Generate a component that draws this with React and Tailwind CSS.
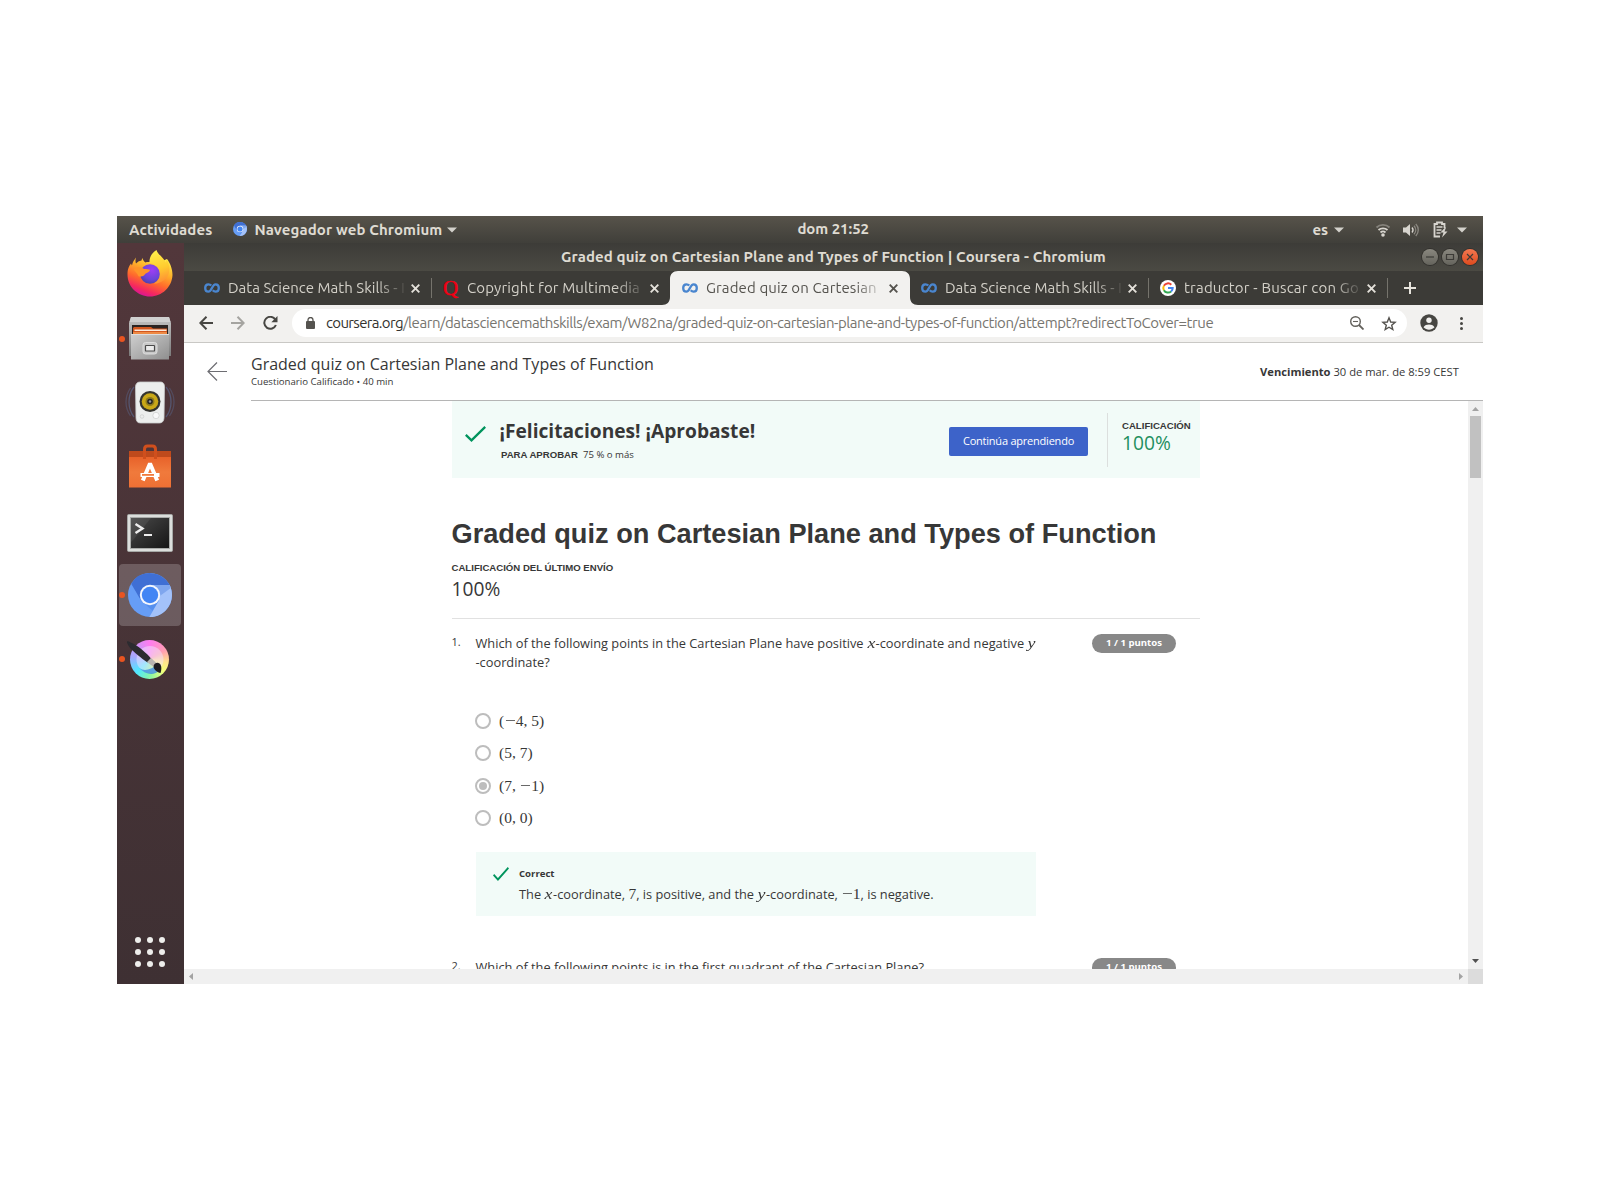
import React from "react";

function T({ className = "", children }) {
  return <span className={"whitespace-pre " + className}>{children}</span>;
}

const Caret = () => (
  <svg width="10" height="6" viewBox="0 0 10 6" fill="#d3d1cb"><path d="M0 .5h10L5 5.5z" /></svg>
);

function ChromiumIcon({ size }) {
  return (
    <svg width={size} height={size} viewBox="0 0 44 44">
      <circle cx="22" cy="22" r="22" fill="#669df6" />
      <path d="M3.200 10.800A22 22 0 0 1 41.600 12L22 12.100 13 27.500z" fill="#3f6fd4" />
      <path d="M22 12.100H41.600A22 22 0 0 1 21.400 44L31 27.300z" fill="#a3c2fa" />
      <path d="M22 12.100H41.600l1.200 3-11 8z" fill="#7fa6ee" />
      <path d="M13 27.500l9 4.500 8.600-4.200-6 10z" fill="#4a86ea" opacity=".6" />
      <circle cx="22" cy="22" r="10.200" fill="#f3f6fd" />
      <circle cx="22" cy="22" r="8.200" fill="#4285f4" />
    </svg>
  );
}

function FirefoxIcon() {
  return (
    <svg width="46" height="48" viewBox="0 0 46 48">
      <defs>
        <linearGradient id="ffBody" x1=".8" y1="0" x2=".35" y2="1">
          <stop offset="0" stopColor="#fff14d" /><stop offset=".35" stopColor="#ffb02a" />
          <stop offset=".62" stopColor="#ff6a2c" /><stop offset=".85" stopColor="#f5285f" /><stop offset="1" stopColor="#d7149a" />
        </linearGradient>
        <linearGradient id="ffTail" x1=".4" y1="0" x2=".6" y2="1">
          <stop offset="0" stopColor="#fff04a" /><stop offset=".55" stopColor="#ffcb2f" /><stop offset="1" stopColor="#ff8a35" />
        </linearGradient>
        <radialGradient id="ffGlobe" cx=".6" cy=".3" r=".8">
          <stop offset="0" stopColor="#a03df5" /><stop offset=".6" stopColor="#6a45d8" /><stop offset="1" stopColor="#45409c" />
        </radialGradient>
      </defs>
      <path d="M9 8.500C8.200 11 8.400 13 9 14.500c1.500-1.500 3-2.600 5.500-3l.8-2.500c.7 2 1.500 3 3 4.500C21 12.500 26 13 29 15l11-5c3 4 5.500 9.500 5.500 16C45 38 35 47.500 23 47.500S.5 38 .5 25.500C.5 20 2 17 4 14.500c.5 1 .7 1.500 1 2C5.500 13.500 7 11 9 8.500z" fill="url(#ffBody)" />
      <path d="M29.500 1c-5 3-7.500 8-7 13 4 .5 8 3 9.500 8 1 5-1 10-5 12.500 5 .5 13-3 15-11 1-5 0-9-2.500-13-.2 1.500-.5 2.200-1 3C37.500 9 31 6 29.500 1z" fill="url(#ffTail)" />
      <circle cx="23" cy="25" r="9.800" fill="url(#ffGlobe)" />
      <path d="M6.500 20.500c4-3.500 8-2 10.500-.5 2.500.2 5 .2 6 .8-.5 2.700-4 3.200-5 4.400-1.500 1.800-3 2.800-6.500 2C10 24 8 22 6.500 20.500z" fill="#ff9528" />
    </svg>
  );
}

function FilesIcon() {
  return (
    <svg width="44" height="46" viewBox="0 0 44 46">
      <defs>
        <linearGradient id="fBack" x1="0" y1="0" x2="0" y2="1"><stop offset="0" stopColor="#c4c4c4" /><stop offset="1" stopColor="#7b7b7b" /></linearGradient>
        <linearGradient id="fFront" x1="0" y1="0" x2="1" y2="1"><stop offset="0" stopColor="#cfcfcf" /><stop offset="1" stopColor="#8f8f8f" /></linearGradient>
      </defs>
      <path d="M3 1h38l2 6v33H1V7z" fill="url(#fBack)" />
      <path d="M3 1h38l1.500 5h-41z" fill="#d0d0d0" />
      <path d="M4 9h36v11H4z" fill="#2b2422" />
      <path d="M6 11h17l2 1.500h14V20H5v-8z" fill="#d2571f" />
      <path d="M6.500 13.500h32V15h-32z" fill="#fbe9dc" />
      <path d="M5 16h34v3H5z" fill="#ee8a45" />
      <path d="M3 18h38v25.500H3z" fill="url(#fFront)" />
      <path d="M3 18h38v1H3z" fill="#dedede" />
      <rect x="15" y="26.500" width="14" height="11.500" rx="2.500" fill="#c9c9c9" stroke="#dcdcdc" />
      <rect x="17.500" y="29.500" width="9" height="5.500" rx=".6" fill="#ececec" stroke="#4b4b4b" strokeWidth="1.200" />
    </svg>
  );
}

function SpeakerIcon() {
  return (
    <svg width="50" height="44" viewBox="0 0 50 44">
      <g fill="none" stroke="#5f7fb4" strokeWidth="1.300">
        <path d="M9 6C5 11 4 16 4 21s1 10 5 15" opacity=".45" /><path d="M5.500 7C2 12 1 16 1 21s1 9 4.500 14" opacity=".3" />
        <path d="M41 6c4 5 5 10 5 15s-1 10-5 15" opacity=".45" /><path d="M44.500 7C48 12 49 16 49 21s-1 9-4.500 14" opacity=".3" />
      </g>
      <path d="M15 1h20c3.500 0 4.500 2 4.500 5L39 37c0 3-2 5-4.500 5h-19C12.500 42 11 40 11 37l-.5-31C10.500 3 12 1 15 1z" fill="#eceeed" stroke="#c9cccb" strokeWidth=".8" />
      <circle cx="25" cy="20.500" r="10.500" fill="#34342f" />
      <circle cx="25" cy="20.500" r="8.300" fill="#c9a817" />
      <circle cx="25" cy="20.500" r="4.500" fill="#8d7a1c" />
      <circle cx="25" cy="20.500" r="2.800" fill="#242424" />
      <circle cx="25" cy="20.500" r="1.200" fill="#9a9a9a" />
      <circle cx="31" cy="34.500" r="3.200" fill="#f8f9f9" stroke="#cfd2d1" strokeWidth=".8" />
      <circle cx="17" cy="35.500" r="1.800" fill="none" stroke="#d5d7d6" />
    </svg>
  );
}

function SoftwareIcon() {
  return (
    <svg width="44" height="46" viewBox="0 0 44 46">
      <defs><linearGradient id="bag" x1="0" y1="0" x2="0" y2="1"><stop offset="0" stopColor="#e8622a" /><stop offset=".5" stopColor="#f07a3c" /><stop offset="1" stopColor="#ee7034" /></linearGradient></defs>
      <path d="M1 8h42v7H1z" fill="#bf4a1c" />
      <path d="M1 14h42v30.500H1z" fill="url(#bag)" />
      <path d="M16.500 16V6.500c0-2.500 1-3.500 3-3.500h5c2 0 3 1 3 3.500V16" fill="none" stroke="#d04f1d" strokeWidth="3" />
      <path d="M14.800 37.500L22 20.500l7.200 17" fill="none" stroke="#fff" strokeWidth="4" strokeLinejoin="bevel" />
      <path d="M12.500 30h19v4h-19z" fill="#fff" /><path d="M14 31h12v1.800H14z" fill="#f07a3c" />
    </svg>
  );
}

function TerminalIcon() {
  return (
    <svg width="46" height="39" viewBox="0 0 46 39">
      <defs><linearGradient id="scr" x1="0" y1="0" x2="1" y2="1"><stop offset="0" stopColor="#4a4a4a" /><stop offset="1" stopColor="#151515" /></linearGradient></defs>
      <rect x=".5" y=".5" width="45" height="37" rx="1.200" fill="#dcdedc" stroke="#a6a8a6" />
      <rect x="3.500" y="3.500" width="39" height="31" fill="url(#scr)" stroke="#a9aba9" />
      <path d="M4 4h20L7 25l-3 3z" fill="#fff" opacity=".07" />
      <path d="M8.500 10l7 4.500-7 4.500" fill="none" stroke="#ededed" strokeWidth="2.400" />
      <path d="M17 20h8v2h-8z" fill="#ededed" />
    </svg>
  );
}

function KritaIcon() {
  return (
    <div className="relative flex h-[39px] w-[46px] justify-center">
      <div className="h-[39px] w-[39px] rounded-full bg-[conic-gradient(from_0deg,#ff7bf0,#ff9fb0_60deg,#ffe58a_100deg,#f4ff7a_130deg,#8ef7a0_175deg,#4fe8ff_225deg,#a6a8ff_280deg,#ff7bf0)]" />
      <svg className="absolute left-0 top-0" width="46" height="39" viewBox="0 0 46 39">
        <circle cx="23" cy="19.500" r="13.500" fill="#f1e6ff" opacity=".5" />
        <path d="M12 28c6 4 12 1 18-3l3 5c-6 6-14 5-21-2z" fill="#3f8fe0" opacity=".8" />
        <path d="M0 1.500c1.500-1 3 1 7 2.500 6 3.500 13 9.500 17 14.500l-3.500 4C14 18 7 12 4 9 2 7-.5 3 0 1.500z" fill="#2c2b30" />
        <path d="M24 18l5.500 5-3.500 3.500-6-4.500z" fill="#b9b5b0" />
        <path d="M26.500 26c1-3 4-4 6-2.500 2.500 2 2 6.500 1 9.500-3-.5-7-3-7-7z" fill="#1f1d20" />
      </svg>
    </div>
  );
}

function DockSlot({ running, active, children }) {
  return (
    <div className="relative flex h-16 w-full items-center justify-center pr-0.5">
      {active && <div className="absolute left-[2px] top-[1px] h-[62px] w-[62px] rounded bg-white/20" />}
      {running && <div className="absolute left-[2px] top-[29px] h-1.5 w-1.5 rounded-full bg-[#e95420]" />}
      <div className="relative">{children}</div>
    </div>
  );
}

function Dock() {
  return (
    <div className="flex w-[67px] shrink-0 flex-col bg-linear-to-b from-[#52373b] to-[#3e3033]">
      <DockSlot><div className="pb-1"><FirefoxIcon /></div></DockSlot>
      <DockSlot running><FilesIcon /></DockSlot>
      <DockSlot><SpeakerIcon /></DockSlot>
      <DockSlot><div className="pb-0.5"><SoftwareIcon /></div></DockSlot>
      <DockSlot><div className="pt-1"><TerminalIcon /></div></DockSlot>
      <DockSlot running active><ChromiumIcon size={44} /></DockSlot>
      <DockSlot running><KritaIcon /></DockSlot>
      <div className="mt-auto grid grid-cols-3 gap-1.5 self-center pb-[17px] pr-0.5">
        {[0, 1, 2, 3, 4, 5, 6, 7, 8].map((i) => <div key={i} className="h-1.5 w-1.5 rounded-full bg-[#eeeeec]" />)}
      </div>
    </div>
  );
}

function TopBar() {
  return (
    <div className="flex h-[27px] shrink-0 items-center bg-linear-to-b from-[#57534a] to-[#403f3a] pl-3 text-[15px] leading-[26px] font-bold text-[#dfdbd2] font-['Ubuntu','Noto_Sans',sans-serif]">
      <T className="tracking-[0.1px]">Actividades</T>
      <div className="ml-[21px] mr-[7px] pb-px"><ChromiumIcon size={14} /></div>
      <T className="tracking-[0.117px]">Navegador web Chromium</T>
      <div className="ml-[5px]"><Caret /></div>
      <div className="ml-[340px] w-[72px] pb-0.5"><T className="tracking-[-0.05px]">dom 21:52</T></div>
      <div className="ml-[443px] w-[17px]"><T>es</T></div>
      <div className="ml-[5px]"><Caret /></div>
      <svg className="ml-[31px]" width="16" height="16" viewBox="0 0 16 16" fill="none" stroke="#d8d5cf" strokeWidth="1.800">
        <path d="M1.500 5.500C5 2 11 2 14.500 5.500" stroke="#85827b" /><path d="M3.500 8c2.500-2.300 6.500-2.300 9 0" /><path d="M5.500 10.500c1.500-1.300 3.500-1.300 5 0" />
        <circle cx="8" cy="13" r="1.800" fill="#d8d5cf" stroke="none" />
      </svg>
      <svg className="ml-3" width="16" height="16" viewBox="0 0 16 16" fill="none" stroke="#8b8881" strokeWidth="1.300">
        <path d="M0 5.500h3L7 2v12L3 10.500H0z" fill="#d8d5cf" stroke="none" /><path d="M9 5.500c1.300 1.500 1.300 3.500 0 5" stroke="#d8d5cf" />
        <path d="M11 3.800c2.300 2.500 2.300 6 0 8.400" /><path d="M12.800 2c3.300 3.500 3.300 8.500 0 12" />
      </svg>
      <svg className="ml-[14px]" width="15" height="17" viewBox="0 0 15 17" fill="none" stroke="#d8d5cf" strokeWidth="1.800">
        <path d="M7 15.500H1.500V3H4V1.500h5V3h2.500v4" /><path d="M3.500 6h6M3.500 9h5M3.500 12h4" strokeWidth="1.500" /><path d="M12 6.500l-4.500 5h3L9 16.500l5.500-6h-3L13 6.500z" fill="#d8d5cf" stroke="none" />
      </svg>
      <div className="ml-[9px]"><Caret /></div>
    </div>
  );
}

function WindowButton({ close, children }) {
  return (
    <div className={"flex h-4 w-4 items-center justify-center rounded-full shadow-[0_0_0_1px_#33322e] " + (close ? "bg-linear-to-b from-[#f2774f] to-[#de4a1c]" : "bg-linear-to-b from-[#8a887f] to-[#65645d]")}>
      <svg width="10" height="10" viewBox="0 0 10 10" fill="none" stroke="#3c3b37" strokeWidth="1.200">{children}</svg>
    </div>
  );
}

const CourseraMark = () => (
  <svg width="16" height="10" viewBox="0 0 16 10" fill="none" stroke="#4a86cf" strokeWidth="2.300">
    <path d="M7.300 2.600C6.500 1.700 5.600 1.300 4.400 1.300 2.500 1.300 1.200 2.900 1.200 5s1.300 3.700 3.200 3.700C8 8.700 7.900 1.300 11.600 1.300c2 0 3.200 1.500 3.200 3.700s-1.300 3.700-3.200 3.700c-1.200 0-2.100-.5-2.900-1.400" />
  </svg>
);
const GoogleG = () => (
  <svg width="16" height="16" viewBox="0 0 16 16" fill="none" strokeWidth="2">
    <circle cx="8" cy="8" r="8" fill="#fff" />
    <path d="M11.300 4.700A4.700 4.700 0 0 0 3.900 5.800" stroke="#ea4335" /><path d="M3.900 5.700a4.700 4.700 0 0 0 0 4.600" stroke="#fbbc05" />
    <path d="M3.900 10.200a4.700 4.700 0 0 0 7.200 1.200" stroke="#34a853" /><path d="M8 8h4.700c0 1.400-.6 2.600-1.600 3.500" stroke="#4285f4" />
  </svg>
);

function Tab({ icon, active, children, sep, textClass = "" }) {
  return (
    <div className={"relative flex h-[34px] w-[239px] shrink-0 items-center pl-3 " + (active ? "text-[#55534e]" : "text-[#d3d0c8]")}>
      {active && (
        <svg className="absolute -left-2 top-0" width="256" height="34" viewBox="0 0 256 34" fill="#f2f1ef">
          <path d="M0 34c5 0 8-3 8-8V8c0-5 3-8 8-8h224c5 0 8 3 8 8v18c0 5 3 8 8 8z" />
        </svg>
      )}
      <div className="relative flex w-4 justify-center">{icon}</div>
      <div className="relative ml-2 w-[177px] overflow-hidden pb-px leading-5 [mask-image:linear-gradient(to_right,black_84%,rgba(0,0,0,0.15)_99%)]"><T className={textClass}>{children}</T></div>
      <svg className={"relative ml-1.5 " + (active ? "text-[#55534e]" : "text-[#e4e1da]")} width="9" height="9" viewBox="0 0 9 9" stroke="currentColor" strokeWidth="1.900"><path d="M.7.700l7.600 7.600M8.300.700L.7 8.300" /></svg>
      {sep && <div className="absolute right-[-1px] top-[7px] h-5 w-px bg-[#75736c]" />}
    </div>
  );
}

function Browser() {
  return (
    <>
      <div className="flex h-7 shrink-0 items-center bg-linear-to-b from-[#3d3c38] to-[#4b4a43] pl-[377px] font-['Ubuntu','Noto_Sans',sans-serif] text-[15px] font-bold leading-7 text-[#dfdbd2]">
        <div className="w-[858px] pb-px"><T className="tracking-[0.117px]">Graded quiz on Cartesian Plane and Types of Function | Coursera - Chromium</T></div>
        <div className="flex gap-1 pl-[3px]">
          <WindowButton><path d="M1 5h8" /></WindowButton>
          <WindowButton><path d="M1.500 2.500h7v5h-7z" /></WindowButton>
          <WindowButton close><path d="M2 2l6 6M8 2L2 8" /></WindowButton>
        </div>
      </div>
      <div className="flex h-[34px] shrink-0 items-center bg-[#3c3b37] pl-2 font-['Ubuntu','Noto_Sans',sans-serif] text-[15px]">
        <Tab icon={<CourseraMark />} sep textClass="tracking-[0.02px]">Data Science Math Skills - I</Tab>
        <Tab icon={<span className="pr-px font-['Liberation_Serif',serif] text-[21px] leading-4 text-[#f00014] [-webkit-text-stroke:0.5px_#f00014]">Q</span>} textClass="tracking-[0.13px]">Copyright for Multimedia</Tab>
        <Tab icon={<CourseraMark />} active textClass="tracking-[0.12px]">Graded quiz on Cartesian</Tab>
        <Tab icon={<CourseraMark />} sep textClass="tracking-[0.02px]">Data Science Math Skills - I</Tab>
        <Tab icon={<GoogleG />} sep textClass="tracking-[0.2px]">traductor - Buscar con Go</Tab>
        <svg className="ml-[17px]" width="12" height="12" viewBox="0 0 12 12" stroke="#e8e5de" strokeWidth="2"><path d="M6 0v12M0 6h12" /></svg>
      </div>
      <div className="flex h-[38px] shrink-0 items-center border-b border-[#c9c8c5] bg-[#f2f1ef] pb-px pl-[15px]">
        <svg width="14" height="14" viewBox="0 0 14 14" fill="none" stroke="#474642" strokeWidth="2"><path d="M14 7H1.500M7.500 .8L1.300 7l6.200 6.200" /></svg>
        <svg className="ml-[18px]" width="14" height="14" viewBox="0 0 14 14" fill="none" stroke="#a5a4a0" strokeWidth="2"><path d="M0 7h12.500M6.500 .8L12.700 7l-6.200 6.200" /></svg>
        <svg className="ml-[17.5px]" width="15" height="14" viewBox="0 0 15 14" fill="none" stroke="#474642" strokeWidth="2"><path d="M12.300 3.500A6 6 0 1 0 12.900 9" /><path d="M14.500 0v6.200H8.300z" fill="#474642" stroke="none" /></svg>
        <div className="ml-[14.5px] flex h-7 w-[1115px] items-center rounded-full bg-white pl-[14px] font-['Ubuntu','Noto_Sans',sans-serif] text-[15px] leading-7 text-[#77756f]">
          <svg className="mb-px" width="9" height="12" viewBox="0 0 9 12"><rect y="4" width="9" height="8" rx="1" fill="#55534f" /><path d="M2 5V3a2.500 2.500 0 0 1 5 0v2" fill="none" stroke="#55534f" strokeWidth="1.300" /></svg>
          <div className="ml-[11px] w-[1024px] pb-px"><T className="tracking-[-0.66px] text-[#33322e]">coursera.org</T><T className="tracking-[-0.433px]">/learn/datasciencemathskills/exam/W82na/graded-quiz-on-cartesian-plane-and-types-of-function/attempt?redirectToCover=true</T></div>
          <svg width="14" height="14" viewBox="0 0 14 14" fill="none" stroke="#63615c" strokeWidth="1.400"><circle cx="5.500" cy="5.500" r="4.800" /><path d="M9 9l4.500 4.500" strokeWidth="1.800" /><path d="M3 5.500h5" strokeWidth="1.100" /></svg>
          <svg className="ml-[17px]" width="16" height="15" viewBox="0 0 16 15" fill="none" stroke="#55534f" strokeWidth="1.400"><path d="M8 1.800l1.700 4.200 4.400.3-3.400 2.900 1.100 4.300L8 11.200l-3.800 2.300 1.100-4.300L1.900 6.300 6.300 6z" /></svg>
        </div>
        <svg className="ml-[13px]" width="18" height="18" viewBox="0 0 18 18"><circle cx="9" cy="9" r="8.700" fill="#474642" /><circle cx="9" cy="6.300" r="2.700" fill="#f2f1ef" /><path d="M3.500 13.300c1-2.300 3.500-2.900 5.500-2.900s4.500.6 5.500 2.900C13 15 11 15.700 9 15.700s-4-.7-5.500-2.400z" fill="#f2f1ef" /></svg>
        <div className="ml-[22px] flex flex-col gap-[2px]">{[0, 1, 2].map((i) => <div key={i} className="h-[3px] w-[3px] rounded-full bg-[#474642]" />)}</div>
      </div>
    </>
  );
}

const M = ({ children, className = "" }) => <T className={"font-['Liberation_Serif',serif] text-[15.5px] leading-none " + className}>{children}</T>;
const Minus = () => <span className="mx-[1.4px] inline-block scale-x-125">−</span>;
const Var = ({ children }) => <M className="mx-[0.9px] inline-block scale-x-115 italic">{children}</M>;

function Check({ w, h }) {
  return <svg width={w} height={h} viewBox="0 0 21 16" preserveAspectRatio="none" fill="none" stroke="#00945d" strokeWidth="2.300"><path d="M.8 8.800l5.700 5.500L20.200.900" /></svg>;
}

function Pill() {
  return <div className="h-[19px] w-[84px] rounded-[9.5px] bg-[#888] text-center text-[9.6px] font-bold leading-[17px] text-white">1 / 1 puntos</div>;
}

function Option({ checked, children }) {
  return (
    <div className="flex h-[32.5px] items-center">
      <div className="flex h-4 w-4 items-center justify-center rounded-full border-2 border-[#bdbdbd]">{checked && <div className="h-2 w-2 rounded-full bg-[#bdbdbd]" />}</div>
      <M className="ml-2 pb-px">{children}</M>
    </div>
  );
}

function Page() {
  return (
    <div className="flex min-h-0 grow flex-col bg-white font-['Open_Sans',sans-serif] text-[#373737]">
      <div className="flex h-[57px] shrink-0">
        <svg className="ml-[23px] mt-[19px]" width="20" height="19" viewBox="0 0 20 19" fill="none" stroke="#6d6d72" strokeWidth="1.200"><path d="M20 9.500H1M10 .5L1 9.500l9 9" /></svg>
        <div className="ml-6 flex w-[1009px] flex-col pt-2.5">
          <div className="text-[16px] leading-[22px]">Graded quiz on Cartesian Plane and Types of Function</div>
          <div className="mt-px text-[9.63px] leading-3">Cuestionario Calificado • 40 min</div>
        </div>
        <div className="pt-5 text-[11.2px] leading-[18px]"><T className="font-bold">Vencimiento</T><T> 30 de mar. de 8:59 CEST</T></div>
      </div>
      <div className="ml-[67px] h-px shrink-0 bg-[#b5b5b5]" />
      <div className="flex min-h-0 grow">
        <div className="h-[568px] w-[1284px] shrink-0 overflow-hidden pl-[268px]">
          <div className="w-[748px]">
            <div className="flex h-[77px] bg-[#f2fbf8]">
              <div className="ml-[13px] mt-[25px] w-[34.5px]"><Check w={21} h={16} /></div>
              <div className="w-[449.5px] pt-4">
                <div className="text-[19.17px] font-bold leading-7">¡Felicitaciones! ¡Aprobaste!</div>
                <div className="ml-[1.5px] mt-[3px] flex items-baseline gap-[5px] text-[9.6px] leading-[14px]"><T className="font-['Liberation_Sans',sans-serif] font-bold">PARA APROBAR</T><T>75 % o más</T></div>
              </div>
              <div className="mt-[26px] h-[29px] w-[139px] rounded-[2px] bg-[#3d63c9] text-center text-[11px] leading-[27px] tracking-[-0.22px] text-white">Continúa aprendiendo</div>
              <div className="ml-[19px] mt-3 h-[54px] w-px bg-[#dcdfde]" />
              <div className="ml-[14px] pt-[18px]">
                <div className="font-['Liberation_Sans',sans-serif] text-[9.6px] font-bold leading-[14px]">CALIFICACIÓN</div>
                <div className="-mt-px text-[19.2px] leading-[22px] text-[#1f8f5f]">100%</div>
              </div>
            </div>
            <div className="-ml-[0.5px] mt-[38px] font-['Liberation_Sans',sans-serif] text-[27.2px] font-bold leading-9">Graded quiz on Cartesian Plane and Types of Function</div>
            <div className="-ml-[0.5px] mt-[9px] font-['Liberation_Sans',sans-serif] text-[9.6px] font-bold leading-[14px]">CALIFICACIÓN DEL ÚLTIMO ENVÍO</div>
            <div className="-ml-[0.5px] mt-px text-[19.2px] leading-[26px]">100%</div>
            <div className="mt-4 h-px bg-[#e1e1e1]" />
            <div className="flex pt-[13px] text-[12.8px] leading-[19px]">
              <div className="-ml-[0.5px] w-6 text-[11px]">1.</div>
              <div className="mt-0.5 w-[616.5px]"><T>Which of the following points in the Cartesian Plane have positive </T><Var>x</Var><T>-coordinate and negative </T><Var>y</Var><br /><T>-coordinate?</T></div>
              <div className="mt-0.5"><Pill /></div>
            </div>
            <div className="ml-[23px] mt-[32.5px]">
              <Option>(<Minus />4, 5)</Option>
              <Option>(5, 7)</Option>
              <Option checked>(7, <Minus />1)</Option>
              <Option>(0, 0)</Option>
            </div>
            <div className="ml-6 mt-[17.5px] flex h-16 w-[560px] bg-[#f2fbf8] pt-[15px]">
              <div className="ml-[17px] w-[26px]"><Check w={16} h={14} /></div>
              <div>
                <div className="text-[9.6px] font-bold leading-[14px]">Correct</div>
                <div className="mt-1 text-[12.8px] leading-[19px]"><T>The </T><Var>x</Var><T>-coordinate, </T><M>7</M><T>, is positive, and the </T><Var>y</Var><T>-coordinate, </T><M><Minus />1</M><T>, is negative.</T></div>
              </div>
            </div>
            <div className="mt-10 flex text-[12.8px] leading-[19px]">
              <div className="-ml-[0.5px] w-6 text-[11px]">2.</div>
              <div className="mt-0.5 w-[616.5px]">Which of the following points is in the first quadrant of the Cartesian Plane?</div>
              <div className="mt-0.5"><Pill /></div>
            </div>
          </div>
        </div>
        <div className="flex w-[15px] flex-col items-center bg-[#f0f0f0]">
          <svg className="mt-1.5" width="7" height="4" viewBox="0 0 7 4" fill="#a3a3a3"><path d="M0 4h7L3.500 0z" /></svg>
          <div className="mt-[5px] h-[62px] w-[11px] bg-[#c1c1c1]" />
          <svg className="mb-1.5 mt-auto" width="7" height="4" viewBox="0 0 7 4" fill="#505050"><path d="M0 0h7L3.500 4z" /></svg>
        </div>
      </div>
      <div className="flex h-[15px] shrink-0 items-center bg-[#f0f0f0] pl-[5px]">
        <svg width="4" height="7" viewBox="0 0 4 7" fill="#a3a3a3"><path d="M4 0v7L0 3.500z" /></svg>
        <svg className="ml-auto mr-[5px]" width="4" height="7" viewBox="0 0 4 7" fill="#a3a3a3"><path d="M0 0v7l4-3.500z" /></svg>
        <div className="h-[15px] w-[15px] bg-[#dcdcdc]" />
      </div>
    </div>
  );
}

export default function App() {
  return (
    <div className="h-[1200px] w-[1600px] overflow-hidden bg-white pl-[117px] pt-[216px]">
      <div className="flex h-[768px] w-[1366px] flex-col overflow-hidden">
        <TopBar />
        <div className="flex min-h-0 grow">
          <Dock />
          <div className="flex w-[1299px] flex-col"><Browser /><Page /></div>
        </div>
      </div>
    </div>
  );
}
